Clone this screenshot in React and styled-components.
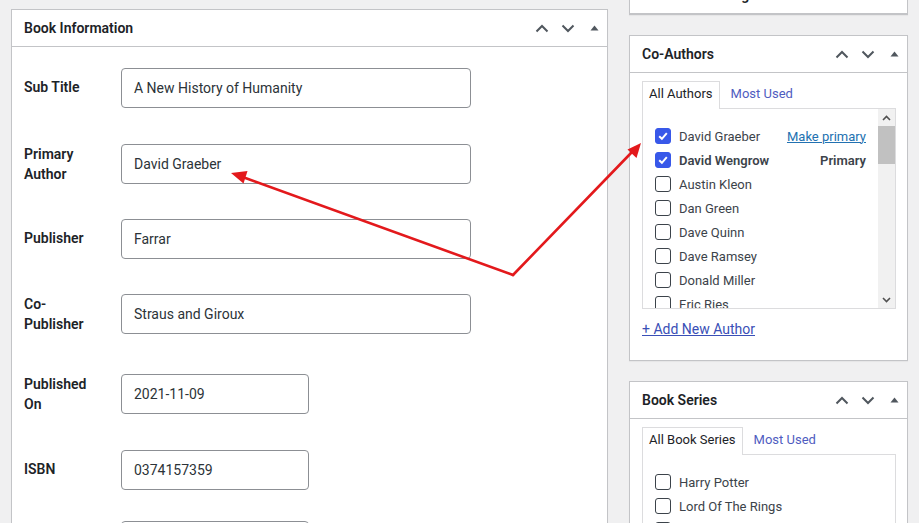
import React from 'react'
import styled, { createGlobalStyle } from 'styled-components'

const GlobalStyle = createGlobalStyle`
  html, body {
    margin: 0;
    padding: 0;
    background: #f0f0f1;
    overflow: hidden;
  }
  body {
    font-family: Roboto, "Noto Sans", sans-serif;
    color: #1d2327;
    font-size: 13px;
  }
`

const fields = [
  { label: 'Sub Title', value: 'A New History of Humanity', wide: true, space: 21 },
  { label: 'Primary Author', value: 'David Graeber', wide: true, space: 36, tall: true },
  { label: 'Publisher', value: 'Farrar', wide: true, space: 35 },
  { label: 'Co-Publisher', value: 'Straus and Giroux', wide: true, space: 35, tall: true },
  { label: 'Published On', value: '2021-11-09', wide: false, space: 40, tall: true },
  { label: 'ISBN', value: '0374157359', wide: false, space: 36 },
  { label: '', value: '', wide: false, space: 31 },
]

const authors = [
  { name: 'David Graeber', checked: true, action: 'Make primary' },
  { name: 'David Wengrow', checked: true, primary: true },
  { name: 'Austin Kleon' },
  { name: 'Dan Green' },
  { name: 'Dave Quinn' },
  { name: 'Dave Ramsey' },
  { name: 'Donald Miller' },
  { name: 'Eric Ries' },
]

const series = ['Harry Potter', 'Lord Of The Rings', 'The Hobbit']

const HeaderButtons = () => (
  <Buttons>
    <IconButton>
      <svg width="14" height="9" viewBox="0 0 14 9">
        <path d="M1.5 7.5 L7 2 L12.5 7.5" fill="none" stroke="#50575e" strokeWidth="2" />
      </svg>
    </IconButton>
    <IconButton>
      <svg width="14" height="9" viewBox="0 0 14 9">
        <path d="M1.5 1.5 L7 7 L12.5 1.5" fill="none" stroke="#50575e" strokeWidth="2" />
      </svg>
    </IconButton>
    <IconButton>
      <svg width="9" height="6" viewBox="0 0 9 6">
        <polygon points="0.5,5.5 4.5,0.5 8.5,5.5" fill="#50575e" />
      </svg>
    </IconButton>
  </Buttons>
)

const Check = ({ checked }) => (
  <Box checked={checked}>
    {checked && (
      <svg width="12" height="12" viewBox="0 0 12 12">
        <path d="M2.2 6.2 L4.9 8.8 L9.8 3.2" fill="none" stroke="#fff" strokeWidth="2" />
      </svg>
    )}
  </Box>
)

const App = () => {
  return (
    <>
      <GlobalStyle />
      <Page>
        <Main>
          <Panel>
            <PanelHeader>
              <Title>Book Information</Title>
              <HeaderButtons />
            </PanelHeader>
            <Form>
              {fields.map((f, i) => (
                <Row key={i} space={f.space}>
                  <Label tall={f.tall}>{f.label === 'Co-Publisher' ? <>Co-<br />Publisher</> : f.label}</Label>
                  <Input wide={f.wide}>{f.value}</Input>
                </Row>
              ))}
            </Form>
          </Panel>
        </Main>

        <Side>
          <Panel>
            <PanelHeader>
              <Title>Book Cover Image</Title>
              <HeaderButtons />
            </PanelHeader>
          </Panel>

          <Panel>
            <PanelHeader>
              <Title>Co-Authors</Title>
              <HeaderButtons />
            </PanelHeader>
            <SideBody>
              <Tabs>
                <Tab active>All Authors</Tab>
                <Tab>Most Used</Tab>
              </Tabs>
              <TabPanel height={201}>
                <List>
                  {authors.map((a) => (
                    <Item key={a.name}>
                      <Check checked={a.checked} />
                      <ItemName bold={a.primary}>{a.name}</ItemName>
                      {a.action && <PrimaryLink>{a.action}</PrimaryLink>}
                      {a.primary && <PrimaryTag>Primary</PrimaryTag>}
                    </Item>
                  ))}
                </List>
                <ScrollBar>
                  <ScrollArrow>
                    <svg width="9" height="6" viewBox="0 0 9 6">
                      <path d="M1 5 L4.5 1.5 L8 5" fill="none" stroke="#505050" strokeWidth="1.6" />
                    </svg>
                  </ScrollArrow>
                  <Track>
                    <Thumb />
                  </Track>
                  <ScrollArrow>
                    <svg width="9" height="6" viewBox="0 0 9 6">
                      <path d="M1 1 L4.5 4.5 L8 1" fill="none" stroke="#505050" strokeWidth="1.6" />
                    </svg>
                  </ScrollArrow>
                </ScrollBar>
              </TabPanel>
              <AddLink>+ Add New Author</AddLink>
            </SideBody>
          </Panel>

          <Panel>
            <PanelHeader>
              <Title>Book Series</Title>
              <HeaderButtons />
            </PanelHeader>
            <SideBody>
              <Tabs>
                <Tab active>All Book Series</Tab>
                <Tab>Most Used</Tab>
              </Tabs>
              <TabPanel height={120}>
                <List>
                  {series.map((s) => (
                    <Item key={s}>
                      <Check />
                      <ItemName>{s}</ItemName>
                    </Item>
                  ))}
                </List>
              </TabPanel>
            </SideBody>
          </Panel>
        </Side>

        <Arrows width="919" height="523" viewBox="0 0 919 523">
          <line x1="513" y1="275" x2="244" y2="177.5" stroke="#e3191c" strokeWidth="2.6" strokeLinecap="round" />
          <polygon points="231,173 247.5,171 243.5,183.5" fill="#e3191c" />
          <line x1="513" y1="275" x2="632" y2="152" stroke="#e3191c" strokeWidth="2.6" strokeLinecap="round" />
          <polygon points="641,143 636.5,158 627.5,149.5" fill="#e3191c" />
        </Arrows>
      </Page>
    </>
  )
}

export default App

const Page = styled.div`
  position: relative;
  height: 523px;
  display: flex;
  align-items: flex-start;
  padding: 9px 0 0 11px;
  gap: 21px;
  box-sizing: border-box;
  overflow: hidden;
`

const Main = styled.div`
  width: 597px;
`

const Side = styled.div`
  width: 279px;
  margin-top: -33px;
  display: flex;
  flex-direction: column;
  gap: 20px;
`

const Panel = styled.div`
  background: #fff;
  border: 1px solid #c3c4c7;
  box-shadow: 0 1px 1px rgba(0, 0, 0, 0.04);
`

const PanelHeader = styled.div`
  height: 36px;
  display: flex;
  align-items: center;
  justify-content: space-between;
  padding-left: 12px;
  border-bottom: 1px solid #c3c4c7;
`

const Title = styled.h2`
  margin: 0;
  font-size: 14px;
  font-weight: 600;
  color: #1d2327;
`

const Buttons = styled.div`
  display: flex;
  height: 100%;
`

const IconButton = styled.div`
  width: 26px;
  height: 100%;
  display: flex;
  align-items: center;
  justify-content: center;
`

const Form = styled.div`
  display: flex;
  flex-direction: column;
  padding: 0 12px 60px;
`

const Row = styled.div`
  display: flex;
  align-items: center;
  margin-top: ${(p) => p.space}px;
`

const Label = styled.div`
  width: 97px;
  box-sizing: border-box;
  padding-right: 20px;
  font-size: 14px;
  font-weight: 600;
  line-height: 20px;
  color: #1d2327;
  margin-top: ${(p) => (p.tall ? -1 : -3)}px;
`

const Input = styled.div`
  width: ${(p) => (p.wide ? 350 : 188)}px;
  height: 40px;
  box-sizing: border-box;
  border: 1px solid #8c8f94;
  border-radius: 4px;
  padding: 0 12px;
  display: flex;
  align-items: center;
  font-size: 14px;
  color: #2c3338;
  background: #fff;
`

const SideBody = styled.div`
  padding: 8px 11px 23px 12px;
`

const Tabs = styled.div`
  display: flex;
  height: 28px;
  margin-bottom: -1px;
  position: relative;
`

const Tab = styled.div`
  display: flex;
  align-items: center;
  padding: 0 6px 4px;
  font-size: 13px;
  color: ${(p) => (p.active ? '#1d2327' : '#4f5cbf')};
  background: ${(p) => (p.active ? '#fff' : 'transparent')};
  border: 1px solid ${(p) => (p.active ? '#dcdcde' : 'transparent')};
  border-bottom: none;
  margin-right: 4px;
`

const TabPanel = styled.div`
  height: ${(p) => p.height}px;
  box-sizing: border-box;
  border: 1px solid #dcdcde;
  background: #fff;
  display: flex;
  overflow: hidden;
`

const List = styled.div`
  flex: 1;
  padding: 15px 12px 0 12px;
  display: flex;
  flex-direction: column;
`

const Item = styled.div`
  height: 24px;
  flex-shrink: 0;
  display: flex;
  align-items: center;
  font-size: 13px;
`

const Box = styled.span`
  width: 16px;
  height: 16px;
  box-sizing: border-box;
  border-radius: 3px;
  border: 1px solid ${(p) => (p.checked ? '#3858e9' : '#3c434a')};
  background: ${(p) => (p.checked ? '#3858e9' : '#fff')};
  display: flex;
  align-items: center;
  justify-content: center;
  margin-right: 8px;
  flex-shrink: 0;
`

const ItemName = styled.span`
  flex: 1;
  color: #3c434a;
  font-weight: ${(p) => (p.bold ? 600 : 400)};
`

const PrimaryLink = styled.span`
  color: #2271b1;
  text-decoration: underline;
`

const PrimaryTag = styled.span`
  color: #3c434a;
  font-weight: 600;
`

const ScrollBar = styled.div`
  width: 17px;
  background: #f1f1f1;
  display: flex;
  flex-direction: column;
`

const ScrollArrow = styled.div`
  height: 17px;
  display: flex;
  align-items: center;
  justify-content: center;
`

const Track = styled.div`
  flex: 1;
`

const Thumb = styled.div`
  height: 38px;
  background: #c1c1c1;
`

const AddLink = styled.div`
  margin-top: 12px;
  font-size: 14px;
  color: #3a4fb6;
  text-decoration: underline;
`

const Arrows = styled.svg`
  position: absolute;
  left: 0;
  top: 0;
  pointer-events: none;
`
